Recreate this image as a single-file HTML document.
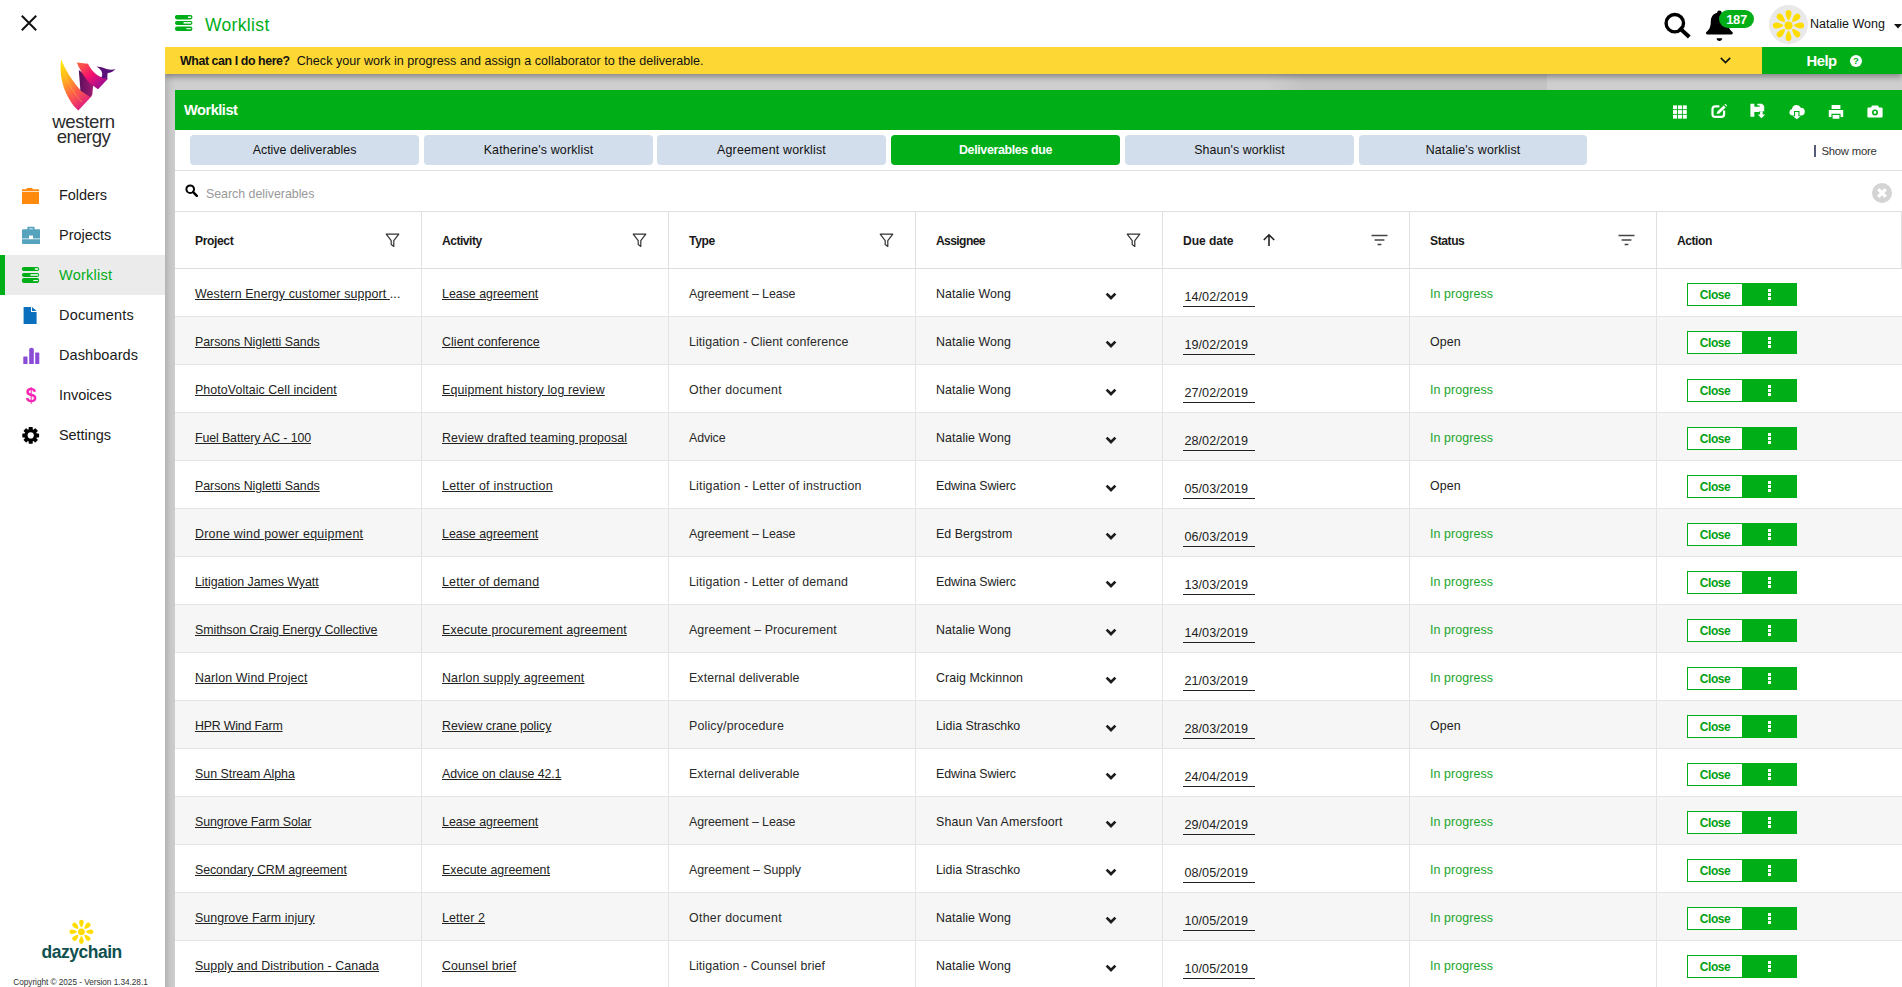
<!DOCTYPE html>
<html lang="en"><head><meta charset="utf-8"><title>Worklist</title>
<style>
*{box-sizing:border-box;margin:0;padding:0}
html,body{width:1902px;height:987px;overflow:hidden;background:#fff}
body{font-family:"Liberation Sans",sans-serif;font-size:12.4px;color:#222;position:relative}
a{color:#222;text-decoration:underline;text-underline-offset:1px}
svg{display:block}
.abs{position:absolute}

/* ---------- sidebar ---------- */
#side{position:absolute;left:0;top:0;width:165px;height:987px;background:#fff;z-index:5}
#side .x{position:absolute;left:21px;top:15px;width:16px;height:16px}
#side .logo{position:absolute;left:58px;top:58px;width:60px;height:54px}
#side .wtxt{position:absolute;left:0;width:165px;text-align:center;color:#2c2c2c;font-size:18.6px;letter-spacing:-.35px;line-height:16px}
#side .wtxt.w1{top:114px;left:1px}
#side .wtxt.w2{top:129.4px;left:1px;letter-spacing:-.55px}
.nav{position:absolute;left:0;width:165px;height:40px}
.nav.act{background:#ebebeb;border-left:5px solid #00ae18}
.nav .ico{position:absolute;top:11px;left:21px;width:19px;height:18px}
.nav.act .ico{left:16px}
.nav .lbl{position:absolute;left:59px;top:0;line-height:40px;font-size:14.5px;color:#1a1a1a}
.nav.act .lbl{left:54px;color:#00ae18}
#dazy{position:absolute;left:40px;top:918px;width:84px;height:50px}
#dztxt{position:absolute;left:0;top:941.4px;width:165px;text-align:center;font-size:18.8px;font-weight:700;color:#10504f;letter-spacing:-.5px;transform:scaleX(.93);transform-origin:81.6px 0;line-height:22px;padding-right:1.8px}
#copy{position:absolute;left:0;top:976.6px;width:165px;text-align:center;font-size:8.25px;color:#333;line-height:11px;padding-right:4px}

/* ---------- main ---------- */
#main{position:absolute;left:165px;top:0;width:1737px;height:987px;background:#cecece}
#sideshadow{position:absolute;left:0;top:74px;width:10px;height:913px;background:linear-gradient(90deg,#b4b4b4,#c6c6c6 50%,#cecece)}
#top{position:absolute;left:0;top:0;width:1737px;height:47px;background:#fff;z-index:4}
#top .ticon{position:absolute;left:10px;top:15px;width:18px;height:16px}
#top .title{position:absolute;left:40px;top:0;line-height:51.6px;font-size:17.5px;color:#00ae18}
#ybar{position:absolute;left:0;top:47px;width:1737px;height:27px;background:#fdd835;box-shadow:0 3px 6px rgba(0,0,0,.35);z-index:3}
#ybar .q{position:absolute;left:15px;top:0;line-height:28.4px;font-size:12.58px;color:#111}
#ybar .q b{font-weight:700;letter-spacing:-.42px;font-size:12.4px}
#ybar .chv{position:absolute;left:1555px;top:10px;width:11px;height:7px}
#help{position:absolute;left:1597px;top:0;width:140px;height:27px;background:#00ae18;color:#fff}
#help b{position:absolute;left:44.6px;top:0;line-height:28px;font-size:14.8px;letter-spacing:-.52px}
#help .qi{position:absolute;left:88.4px;top:8.2px;width:12px;height:12px}

#panel{position:absolute;left:10px;top:90px;width:1727px;height:897px;background:#fff}
#phead{position:absolute;left:0;top:0;width:1727px;height:40px;background:#00ae18}
#phead .pt{position:absolute;left:9px;top:0;line-height:40px;font-size:14.6px;font-weight:700;color:#fff;letter-spacing:-.49px}
#phead svg{position:absolute;top:15px;width:16px;height:14px}
#tabs{position:absolute;left:0;top:40px;width:1727px;height:41px;border-bottom:1px solid #e0e0e0}
.tab{position:absolute;top:5px;width:229px;height:30px;border-radius:4px;background:#d3deec;text-align:center;line-height:31px;font-size:12.4px;color:#111}
.tab.on{background:#00ae18;color:#fff;font-weight:700;letter-spacing:-.34px}
#more{position:absolute;left:1639px;top:13.8px;font-size:11.3px;color:#333;line-height:14px;white-space:nowrap}
#more i{display:inline-block;width:2px;height:12.6px;background:#565b78;vertical-align:-2.4px;margin-right:5.4px}
#search{position:absolute;left:0;top:81px;width:1727px;height:41px;border-bottom:1px solid #e0e0e0}
#search .si{position:absolute;left:9.6px;top:13.2px;width:13px;height:13px}
#search .ph{position:absolute;left:31px;top:0;line-height:47px;font-size:12.4px;color:#999}
#search .clr{position:absolute;left:1697px;top:11.7px;width:20px;height:20px}
#thead{position:absolute;left:0;top:122px;width:1727px;height:57px;border-bottom:1px solid #dedede}
.th{position:absolute;top:0;height:56px;width:247px;border-right:1px solid #e0e0e0;line-height:59px;padding-left:20px;font-weight:700;font-size:12.1px;color:#1a1a1a;letter-spacing:-.4px}
.th svg{position:absolute}
.rows{position:absolute;left:0;top:179px;width:1727px;height:720px}
.row{position:absolute;left:0;width:1727px;height:48px;border-bottom:1px solid #e4e4e4;background:#fff}
.row.alt{background:#f6f6f6}
.c{position:absolute;top:0;height:47px;width:247px;border-right:1px solid #e4e4e4;padding-left:20px;line-height:50px;white-space:nowrap;overflow:hidden;color:#222}
.c1{left:0}.c2{left:247px}.c3{left:494px}.c4{left:741px}.c5{left:988px}.c6{left:1235px}.c7{left:1482px;border-right:0;width:245px}
.c3{color:#2a2a2a}
.chev{position:absolute;left:189px;top:23px;width:12px;height:8px}
.date{position:absolute;left:20px;top:16px;width:71.5px;height:22px;line-height:24px;border-bottom:1px solid #222;padding-left:1.4px;font-size:12.6px;letter-spacing:0.067px}
.st.prog{color:#1aa52b}
.btn{position:absolute;left:30px;top:14px;width:110px;height:23px;border:1px solid #00ae18;background:#fff}
.bclose{position:absolute;left:0;top:0;width:54px;height:21px;line-height:22px;text-align:center;color:#00a012;font-weight:700;font-size:12px;letter-spacing:-.45px}
.bmore{position:absolute;left:54px;top:-1px;width:55px;height:23px;background:#00ae18}
.bmore i{position:absolute;left:26px;width:3px;height:3px;background:#fff}
.bmore i:nth-child(1){top:6px}.bmore i:nth-child(2){top:10px}.bmore i:nth-child(3){top:14px}

#dk{position:absolute;left:1100px;top:74px;width:282px;height:16px;background:linear-gradient(90deg,rgba(0,0,0,0),rgba(0,0,0,.055) 14%,rgba(0,0,0,.055))}

</style></head>
<body>
<div id="side">
<svg class="x" viewBox="0 0 16 16"><path d="M0.8 0.8 L15.2 15.2 M15.2 0.8 L0.8 15.2" stroke="#111" stroke-width="2" fill="none"/></svg>
<svg class="logo" viewBox="58 58 60 54">
<defs>
<linearGradient id="g1" x1="0" y1="0" x2="0.55" y2="1"><stop offset="0" stop-color="#fff200"/><stop offset="0.35" stop-color="#ffb21e"/><stop offset="0.7" stop-color="#ff5a4a"/><stop offset="1" stop-color="#e0207e"/></linearGradient>
<linearGradient id="g2" x1="0" y1="0" x2="1" y2="1"><stop offset="0" stop-color="#ff6a3a"/><stop offset="0.45" stop-color="#f5126e"/><stop offset="1" stop-color="#7a0aa0"/></linearGradient>
<linearGradient id="g3" x1="0" y1="0" x2="1" y2="0"><stop offset="0" stop-color="#5a0f5e"/><stop offset="1" stop-color="#a01a70"/></linearGradient>
</defs>
<path d="M61.3 59.2 C64 68 73 82 80.4 90 L92.1 95.7 L78.3 110.6 C66 99 58 78 61.3 59.2Z" fill="url(#g1)"/><path d="M63.5 68 C66 80 72 92 82 102" fill="none" stroke="#ffd23a" stroke-opacity=".55" stroke-width=".7"/>
<path d="M78.8 70 L80.4 90.4 L90.2 97 L92.3 94.6 L93.2 84.5 L84 74Z" fill="url(#g3)"/>
<path d="M76.7 62.5 L88 63.8 C91 70 96 75.5 102.8 77.7 L108 78.8 L98 89.3 L92.1 85.1 C86 80 80.5 71.5 76.7 62.5Z" fill="url(#g2)"/>
<path d="M96.4 66.5 C103 66.3 108 71.5 115.6 69 C112.5 72.3 109.5 73 107.6 73 L107.2 79 L101.2 77.7 C103 75 103.2 70.5 96.4 66.5Z" fill="#5a1078"/>
</svg>
<div class="wtxt w1">western</div>
<div class="wtxt w2">energy</div>

<div class="nav" style="top:175px"><svg class="ico" viewBox="0 0 19 18"><path d="M1 3.2 H5.2 L6.2 2 H11 L12 3.2 H18 V5.2 H1Z M1 6 H18 V18 H1Z" fill="#ff8a0d"/></svg><span class="lbl" style="letter-spacing:-0.044px">Folders</span></div>
<div class="nav" style="top:215px"><svg class="ico" viewBox="0 0 19 18"><path d="M7 0.8 H13 Q13.6 0.8 13.6 1.4 V3.3 H18.3 Q19.3 3.3 19.3 4.3 V12.4 H12 V9.6 H8 V12.4 H1 V4.3 Q1 3.3 2 3.3 H6.4 V1.4 Q6.4 0.8 7 0.8Z M8.2 2.4 V3.3 H11.8 V2.4Z M1 13.3 H19.3 V16.9 Q19.3 17.9 18.3 17.9 H2 Q1 17.9 1 16.9Z" fill="#56a3bd" fill-rule="evenodd"/></svg><span class="lbl" style="letter-spacing:-0.014px">Projects</span></div>
<div class="nav act" style="top:255px"><svg class="ico" viewBox="0 0 19 18"><g fill="#00ae18"><rect x="0.9" y="1" width="17.2" height="4" rx="1.8"/><rect x="0.9" y="7" width="17.2" height="3.9" rx="1.8"/><rect x="0.9" y="12.1" width="17.2" height="4.8" rx="2"/></g><g fill="#fff"><rect x="13.9" y="2.3" width="3.1" height="1.5"/><rect x="9.4" y="8.2" width="7.6" height="1.5"/><rect x="12.2" y="14.1" width="4.8" height="1"/></g></svg><span class="lbl" style="letter-spacing:0.236px">Worklist</span></div>
<div class="nav" style="top:295px"><svg class="ico" viewBox="0 0 19 18"><path d="M2.6 1 H10 V6 H15.6 V18 H2.6Z M11 1 L15.6 5 H11Z" fill="#0a70bd"/></svg><span class="lbl" style="letter-spacing:0.185px">Documents</span></div>
<div class="nav" style="top:335px"><svg class="ico" viewBox="0 0 19 18"><g fill="#8a4cd6"><rect x="2.3" y="10.4" width="4.2" height="7.6" rx=".6"/><path d="M8.2 18 V3.6 Q8.2 1.7 10.5 1.7 Q12.8 1.7 12.8 3.6 V18Z"/><rect x="14.2" y="6.6" width="4.1" height="11.4" rx=".6"/></g></svg><span class="lbl" style="letter-spacing:0.087px">Dashboards</span></div>
<div class="nav" style="top:375px"><svg class="ico" viewBox="0 0 19 18" style="overflow:visible"><text x="10.2" y="15.6" text-anchor="middle" font-family="Liberation Sans, sans-serif" font-size="19.5" font-weight="700" fill="#f725b2">$</text></svg><span class="lbl" style="letter-spacing:-0.062px">Invoices</span></div>
<div class="nav" style="top:415px"><svg class="ico" viewBox="0 0 19 18"><g transform="translate(9.7,9.4)"><g fill="#000"><rect x="-2" y="-8.4" width="4" height="16.8" rx=".6"/><rect x="-2" y="-8.4" width="4" height="16.8" rx=".6" transform="rotate(45)"/><rect x="-2" y="-8.4" width="4" height="16.8" rx=".6" transform="rotate(90)"/><rect x="-2" y="-8.4" width="4" height="16.8" rx=".6" transform="rotate(135)"/><circle r="6.3"/></g><circle r="3.1" fill="#fff"/></g></svg><span class="lbl" style="letter-spacing:-0.063px">Settings</span></div>

<svg id="dazy" viewBox="40 918 84 50"><g transform="translate(81.4,931.8)" fill="#ffdd00"><circle r="3.4"/><g id="pt"><path d="M0 -4.2 C-1.2 -5.3 -2.3 -7.8 -2.25 -9.7 C-2.2 -11.3 -1.2 -12 0 -12 C1.2 -12 2.2 -11.3 2.25 -9.7 C2.3 -7.8 1.2 -5.3 0 -4.2Z"/></g><use href="#pt" transform="rotate(45)"/><use href="#pt" transform="rotate(90)"/><use href="#pt" transform="rotate(135)"/><use href="#pt" transform="rotate(180)"/><use href="#pt" transform="rotate(225)"/><use href="#pt" transform="rotate(270)"/><use href="#pt" transform="rotate(315)"/></g></svg>
<div id="dztxt">dazychain</div>
<div id="copy" style="letter-spacing:-0.042px">Copyright © 2025 - Version 1.34.28.1</div>
</div>

<div id="main">
<div id="sideshadow"></div><div id="dk"></div>
<div id="top">
<svg class="ticon" viewBox="0 0 18 16"><g fill="#00ae18"><rect x="0" y="0" width="17.4" height="4.4" rx="1.8"/><rect x="0" y="5.9" width="17.4" height="4" rx="1.8"/><rect x="0" y="11.4" width="17.4" height="4.5" rx="2"/></g><g fill="#fff"><rect x="13" y="1.5" width="3.1" height="1.5"/><rect x="8.5" y="7.1" width="7.6" height="1.5"/><rect x="11.3" y="13.2" width="4.8" height="1"/></g></svg>
<div class="title" style="letter-spacing:0.334px">Worklist</div>
<svg class="abs" style="left:1499px;top:12px;width:27px;height:27px" viewBox="0 0 27 27"><circle cx="10.8" cy="11.2" r="8.7" fill="none" stroke="#000" stroke-width="3.4"/><path d="M16.8 17.2 L23.8 23.6" stroke="#000" stroke-width="4" stroke-linecap="square"/></svg>
<svg class="abs" style="left:1540px;top:10px;width:30px;height:32px" viewBox="0 0 30 32"><path d="M14.4 0.6 C15.7 0.6 16.6 1.5 16.6 2.8 C21 3.8 23 7.4 23 11.6 C23 17 24.6 19.8 27.2 21.8 C28.4 22.8 27.8 24.6 26.2 24.6 H2.6 C1 24.6 0.4 22.8 1.6 21.8 C4.2 19.8 5.8 17 5.8 11.6 C5.8 7.4 7.8 3.8 12.2 2.8 C12.2 1.5 13.1 0.6 14.4 0.6Z M11.6 28.2 H17.2 C17.2 29.8 16 31 14.4 31 C12.8 31 11.6 29.8 11.6 28.2Z" fill="#000"/></svg>
<div class="abs" style="left:1554px;top:10px;width:35px;height:18px;border-radius:9px;background:#00ae18;color:#fff;font-weight:700;font-size:13px;line-height:20.4px;text-align:center;letter-spacing:-.47px">187</div>
<div class="abs" style="left:1604px;top:5px;width:39px;height:39px;border-radius:50%;background:#e9e9e9"></div>
<svg class="abs" style="left:1607px;top:9px;width:33px;height:33px" viewBox="-16.5 -16.5 33 33"><g fill="#ffdd00"><circle r="4"/><path id="pa" d="M0 -5 C-1.6 -6.5 -3 -10 -2.95 -12.5 C-2.9 -14.6 -1.6 -15.6 0 -15.6 C1.6 -15.6 2.9 -14.6 2.95 -12.5 C3 -10 1.6 -6.5 0 -5Z"/><use href="#pa" transform="rotate(45)"/><use href="#pa" transform="rotate(90)"/><use href="#pa" transform="rotate(135)"/><use href="#pa" transform="rotate(180)"/><use href="#pa" transform="rotate(225)"/><use href="#pa" transform="rotate(270)"/><use href="#pa" transform="rotate(315)"/></g></svg>
<div class="abs" style="left:1645px;top:0;line-height:49px;font-size:12.5px;color:#111;white-space:nowrap;letter-spacing:0.003px">Natalie Wong</div>
<svg class="abs" style="left:1729px;top:24px;width:8px;height:5px" viewBox="0 0 8 5"><path d="M0 0 H8 L4 4.6Z" fill="#111"/></svg>
</div>

<div id="ybar">
<div class="q"><b>What can I do here?</b>&nbsp; <span style="letter-spacing:0.009px">Check your work in progress and assign a collaborator to the deliverable.</span></div>
<svg class="chv" viewBox="0 0 11 7"><path d="M0.8 0.9 L5.5 5.6 L10.2 0.9" fill="none" stroke="#111" stroke-width="1.6"/></svg>
<div id="help"><b>Help</b><svg class="qi" viewBox="0 0 12 12"><circle cx="6" cy="6" r="6" fill="#fff"/><text x="6" y="9.4" text-anchor="middle" font-family="Liberation Sans, sans-serif" font-weight="700" font-size="9.5" fill="#00ae18">?</text></svg></div>
</div>

<div id="panel">
<div id="phead"><div class="pt">Worklist</div>
<svg style="left:1497px" viewBox="0 0 16 14"><g fill="#fff"><rect x="1" y="0.4" width="4" height="3.8"/><rect x="5.9" y="0.4" width="4" height="3.8"/><rect x="10.8" y="0.4" width="4" height="3.8"/><rect x="1" y="5.1" width="4" height="3.8"/><rect x="5.9" y="5.1" width="4" height="3.8"/><rect x="10.8" y="5.1" width="4" height="3.8"/><rect x="1" y="9.8" width="4" height="3.8"/><rect x="5.9" y="9.8" width="4" height="3.8"/><rect x="10.8" y="9.8" width="4" height="3.8"/></g></svg>
<svg style="left:1536px;overflow:visible" viewBox="0 0 16 14"><path d="M8.4 1.3 H4.2 Q1.5 1.3 1.5 4 V9.2 Q1.5 11.9 4.2 11.9 H10.4 Q13.1 11.9 13.1 9.2 V5.6" fill="none" stroke="#fff" stroke-width="2.2"/><path d="M5.6 9 L6.4 6.6 L12.6 0.4 L14.6 2.4 L8.4 8.6 Z M13.4 -0.4 L14.2 -1.2 L16.2 0.8 L15.4 1.6Z" fill="#fff"/></svg>
<svg style="left:1575px;overflow:visible" viewBox="0 0 16 14"><path d="M0.4 -1.2 H4.4 V1.8 H9.7 V0.4 H7.4 V-1.2 H12 L14.2 1 V6.2 H9.4 V7 H4.3 V11.8 H0.4Z" fill="#fff"/><path d="M10.1 6.2 H12.7 V9.4 H15.2 L11.4 13.2 L7.7 9.4 H10.1Z" fill="#fff"/></svg>
<svg style="left:1614px;overflow:visible" viewBox="0 0 16 14"><path d="M4 10.4 Q0.4 10.4 0.4 7.2 Q0.4 4.6 3 4 Q3.6 0 7.6 0 Q10.6 0 11.8 2.8 Q15.8 3 15.8 6.8 Q15.8 10.4 12 10.4 H10.5 V5.9 H5 V10.4Z" fill="#fff"/><path d="M6.1 6.9 H9.4 V11.2 H11.7 L7.8 14.2 L3.9 11.2 H6.1Z" fill="#fff"/></svg>
<svg style="left:1653px" viewBox="0 0 16 14"><path d="M3.6 -0.6 H12.4 V4 H3.6Z M0.8 5 H15.2 V12 H12.6 V8.8 H3.4 V12 H0.8Z M4.6 10 H11.4 V13.8 H4.6Z" fill="#fff"/></svg>
<svg style="left:1692px" viewBox="0 0 16 14"><path d="M5 0.6 H11 L12 2.6 H14.6 Q15.6 2.6 15.6 3.6 V11.6 Q15.6 12.6 14.6 12.6 H1.4 Q0.4 12.6 0.4 11.6 V3.6 Q0.4 2.6 1.4 2.6 H4Z M8 4.4 A3 3 0 1 0 8 10.4 A3 3 0 1 0 8 4.4Z M8 6 A1.4 1.4 0 1 1 8 8.8 A1.4 1.4 0 1 1 8 6Z" fill="#fff" fill-rule="evenodd"/></svg>
</div>

<div id="tabs">
<div class="tab" style="left:15px;letter-spacing:0.023px">Active deliverables</div>
<div class="tab" style="left:249px;letter-spacing:0.168px">Katherine's worklist</div>
<div class="tab" style="left:482px;letter-spacing:0.200px">Agreement worklist</div>
<div class="tab on" style="left:716px">Deliverables due</div>
<div class="tab" style="left:950px;letter-spacing:0.095px">Shaun's worklist</div>
<div class="tab" style="left:1184px;width:228px;letter-spacing:0.158px">Natalie's worklist</div>
<div id="more" style="letter-spacing:-0.216px"><i></i>Show more</div>
</div>

<div id="search">
<svg class="si" viewBox="0 0 13 13"><circle cx="5.2" cy="5.2" r="3.8" fill="none" stroke="#000" stroke-width="2"/><path d="M8.2 8.2 L11.8 11.8" stroke="#000" stroke-width="2.4" stroke-linecap="round"/></svg>
<div class="ph" style="letter-spacing:-0.022px">Search deliverables</div>
<svg class="clr" viewBox="0 0 20 20"><circle cx="10" cy="10" r="10" fill="#d4d4d4"/><path d="M6.2 6.2 L13.8 13.8 M13.8 6.2 L6.2 13.8" stroke="#fff" stroke-width="3.3"/></svg>
</div>

<div id="thead">
<div class="th" style="left:0;letter-spacing:-0.386px">Project<svg style="left:210px;top:21px;width:15px;height:15px" viewBox="0 0 15 15"><path d="M1.2 1.2 H13.8 L8.8 7.6 V13.4 L6.2 11.6 V7.6Z" fill="none" stroke="#333" stroke-width="1.2" stroke-linejoin="round"/></svg></div>
<div class="th" style="left:247px;letter-spacing:-0.5px">Activity<svg style="left:210px;top:21px;width:15px;height:15px" viewBox="0 0 15 15"><path d="M1.2 1.2 H13.8 L8.8 7.6 V13.4 L6.2 11.6 V7.6Z" fill="none" stroke="#333" stroke-width="1.2" stroke-linejoin="round"/></svg></div>
<div class="th" style="left:494px;letter-spacing:-0.335px">Type<svg style="left:210px;top:21px;width:15px;height:15px" viewBox="0 0 15 15"><path d="M1.2 1.2 H13.8 L8.8 7.6 V13.4 L6.2 11.6 V7.6Z" fill="none" stroke="#333" stroke-width="1.2" stroke-linejoin="round"/></svg></div>
<div class="th" style="left:741px;letter-spacing:-0.61px">Assignee<svg style="left:210px;top:21px;width:15px;height:15px" viewBox="0 0 15 15"><path d="M1.2 1.2 H13.8 L8.8 7.6 V13.4 L6.2 11.6 V7.6Z" fill="none" stroke="#333" stroke-width="1.2" stroke-linejoin="round"/></svg></div>
<div class="th" style="left:988px;letter-spacing:-0.07px">Due date<svg style="left:99px;top:21px;width:14px;height:14px" viewBox="0 0 14 14"><path d="M7 13 V1.8 M1.8 7 L7 1.8 L12.2 7" fill="none" stroke="#222" stroke-width="1.6"/></svg><svg style="left:208px;top:22px;width:17px;height:12px" viewBox="0 0 17 12"><path d="M0.5 1.4 H16.5 M3.6 6 H13.4 M6.6 10.6 H10.4" stroke="#444" stroke-width="1.5"/></svg></div>
<div class="th" style="left:1235px;letter-spacing:-0.43px">Status<svg style="left:208px;top:22px;width:17px;height:12px" viewBox="0 0 17 12"><path d="M0.5 1.4 H16.5 M3.6 6 H13.4 M6.6 10.6 H10.4" stroke="#444" stroke-width="1.5"/></svg></div>
<div class="th" style="left:1482px;width:245px;letter-spacing:-.47px">Action</div>
</div>

<div class="rows">
<div class="row" style="top:0px">
<div class="c c1" style="letter-spacing:0.112px"><a>Western Energy customer support </a>...</div>
<div class="c c2" style="letter-spacing:-0.009px"><a>Lease agreement</a></div>
<div class="c c3" style="letter-spacing:-0.106px">Agreement – Lease</div>
<div class="c c4" style="letter-spacing:0.058px"><span>Natalie Wong</span><svg class="chev" viewBox="0 0 12 8"><path d="M1.6 1.6 L6 6 L10.4 1.6" fill="none" stroke="#1d1d1d" stroke-width="2.7"/></svg></div>
<div class="c c5"><span class="date">14/02/2019</span></div>
<div class="c c6" style="letter-spacing:0.091px"><span class="st prog">In progress</span></div>
<div class="c c7"><div class="btn"><span class="bclose">Close</span><span class="bmore"><i></i><i></i><i></i></span></div></div>
</div>
<div class="row alt" style="top:48px">
<div class="c c1" style="letter-spacing:-0.029px"><a>Parsons Nigletti Sands</a></div>
<div class="c c2" style="letter-spacing:0.072px"><a>Client conference</a></div>
<div class="c c3" style="letter-spacing:0.079px">Litigation - Client conference</div>
<div class="c c4" style="letter-spacing:0.058px"><span>Natalie Wong</span><svg class="chev" viewBox="0 0 12 8"><path d="M1.6 1.6 L6 6 L10.4 1.6" fill="none" stroke="#1d1d1d" stroke-width="2.7"/></svg></div>
<div class="c c5"><span class="date">19/02/2019</span></div>
<div class="c c6" style="letter-spacing:0.121px"><span class="st">Open</span></div>
<div class="c c7"><div class="btn"><span class="bclose">Close</span><span class="bmore"><i></i><i></i><i></i></span></div></div>
</div>
<div class="row" style="top:96px">
<div class="c c1" style="letter-spacing:0.078px"><a>PhotoVoltaic Cell incident</a></div>
<div class="c c2" style="letter-spacing:0.156px"><a>Equipment history log review</a></div>
<div class="c c3" style="letter-spacing:0.287px">Other document</div>
<div class="c c4" style="letter-spacing:0.058px"><span>Natalie Wong</span><svg class="chev" viewBox="0 0 12 8"><path d="M1.6 1.6 L6 6 L10.4 1.6" fill="none" stroke="#1d1d1d" stroke-width="2.7"/></svg></div>
<div class="c c5"><span class="date">27/02/2019</span></div>
<div class="c c6" style="letter-spacing:0.091px"><span class="st prog">In progress</span></div>
<div class="c c7"><div class="btn"><span class="bclose">Close</span><span class="bmore"><i></i><i></i><i></i></span></div></div>
</div>
<div class="row alt" style="top:144px">
<div class="c c1" style="letter-spacing:-0.118px"><a>Fuel Battery AC - 100</a></div>
<div class="c c2" style="letter-spacing:0.132px"><a>Review drafted teaming proposal</a></div>
<div class="c c3" style="letter-spacing:-0.127px">Advice</div>
<div class="c c4" style="letter-spacing:0.058px"><span>Natalie Wong</span><svg class="chev" viewBox="0 0 12 8"><path d="M1.6 1.6 L6 6 L10.4 1.6" fill="none" stroke="#1d1d1d" stroke-width="2.7"/></svg></div>
<div class="c c5"><span class="date">28/02/2019</span></div>
<div class="c c6" style="letter-spacing:0.091px"><span class="st prog">In progress</span></div>
<div class="c c7"><div class="btn"><span class="bclose">Close</span><span class="bmore"><i></i><i></i><i></i></span></div></div>
</div>
<div class="row" style="top:192px">
<div class="c c1" style="letter-spacing:-0.029px"><a>Parsons Nigletti Sands</a></div>
<div class="c c2" style="letter-spacing:0.260px"><a>Letter of instruction</a></div>
<div class="c c3" style="letter-spacing:0.194px">Litigation - Letter of instruction</div>
<div class="c c4" style="letter-spacing:-0.109px"><span>Edwina Swierc</span><svg class="chev" viewBox="0 0 12 8"><path d="M1.6 1.6 L6 6 L10.4 1.6" fill="none" stroke="#1d1d1d" stroke-width="2.7"/></svg></div>
<div class="c c5"><span class="date">05/03/2019</span></div>
<div class="c c6" style="letter-spacing:0.121px"><span class="st">Open</span></div>
<div class="c c7"><div class="btn"><span class="bclose">Close</span><span class="bmore"><i></i><i></i><i></i></span></div></div>
</div>
<div class="row alt" style="top:240px">
<div class="c c1" style="letter-spacing:0.275px"><a>Drone wind power equipment</a></div>
<div class="c c2" style="letter-spacing:-0.009px"><a>Lease agreement</a></div>
<div class="c c3" style="letter-spacing:-0.106px">Agreement – Lease</div>
<div class="c c4" style="letter-spacing:0.054px"><span>Ed Bergstrom</span><svg class="chev" viewBox="0 0 12 8"><path d="M1.6 1.6 L6 6 L10.4 1.6" fill="none" stroke="#1d1d1d" stroke-width="2.7"/></svg></div>
<div class="c c5"><span class="date">06/03/2019</span></div>
<div class="c c6" style="letter-spacing:0.091px"><span class="st prog">In progress</span></div>
<div class="c c7"><div class="btn"><span class="bclose">Close</span><span class="bmore"><i></i><i></i><i></i></span></div></div>
</div>
<div class="row" style="top:288px">
<div class="c c1" style="letter-spacing:-0.039px"><a>Litigation James Wyatt</a></div>
<div class="c c2" style="letter-spacing:0.223px"><a>Letter of demand</a></div>
<div class="c c3" style="letter-spacing:0.163px">Litigation - Letter of demand</div>
<div class="c c4" style="letter-spacing:-0.109px"><span>Edwina Swierc</span><svg class="chev" viewBox="0 0 12 8"><path d="M1.6 1.6 L6 6 L10.4 1.6" fill="none" stroke="#1d1d1d" stroke-width="2.7"/></svg></div>
<div class="c c5"><span class="date">13/03/2019</span></div>
<div class="c c6" style="letter-spacing:0.091px"><span class="st prog">In progress</span></div>
<div class="c c7"><div class="btn"><span class="bclose">Close</span><span class="bmore"><i></i><i></i><i></i></span></div></div>
</div>
<div class="row alt" style="top:336px">
<div class="c c1" style="letter-spacing:-0.066px"><a>Smithson Craig Energy Collective</a></div>
<div class="c c2" style="letter-spacing:0.149px"><a>Execute procurement agreement</a></div>
<div class="c c3" style="letter-spacing:0.109px">Agreement – Procurement</div>
<div class="c c4" style="letter-spacing:0.058px"><span>Natalie Wong</span><svg class="chev" viewBox="0 0 12 8"><path d="M1.6 1.6 L6 6 L10.4 1.6" fill="none" stroke="#1d1d1d" stroke-width="2.7"/></svg></div>
<div class="c c5"><span class="date">14/03/2019</span></div>
<div class="c c6" style="letter-spacing:0.091px"><span class="st prog">In progress</span></div>
<div class="c c7"><div class="btn"><span class="bclose">Close</span><span class="bmore"><i></i><i></i><i></i></span></div></div>
</div>
<div class="row" style="top:384px">
<div class="c c1" style="letter-spacing:0.119px"><a>Narlon Wind Project</a></div>
<div class="c c2" style="letter-spacing:0.175px"><a>Narlon supply agreement</a></div>
<div class="c c3" style="letter-spacing:0.089px">External deliverable</div>
<div class="c c4" style="letter-spacing:0.071px"><span>Craig Mckinnon</span><svg class="chev" viewBox="0 0 12 8"><path d="M1.6 1.6 L6 6 L10.4 1.6" fill="none" stroke="#1d1d1d" stroke-width="2.7"/></svg></div>
<div class="c c5"><span class="date">21/03/2019</span></div>
<div class="c c6" style="letter-spacing:0.091px"><span class="st prog">In progress</span></div>
<div class="c c7"><div class="btn"><span class="bclose">Close</span><span class="bmore"><i></i><i></i><i></i></span></div></div>
</div>
<div class="row alt" style="top:432px">
<div class="c c1" style="letter-spacing:-0.205px"><a>HPR Wind Farm</a></div>
<div class="c c2" style="letter-spacing:-0.047px"><a>Review crane policy</a></div>
<div class="c c3" style="letter-spacing:0.168px">Policy/procedure</div>
<div class="c c4" style="letter-spacing:-0.035px"><span>Lidia Straschko</span><svg class="chev" viewBox="0 0 12 8"><path d="M1.6 1.6 L6 6 L10.4 1.6" fill="none" stroke="#1d1d1d" stroke-width="2.7"/></svg></div>
<div class="c c5"><span class="date">28/03/2019</span></div>
<div class="c c6" style="letter-spacing:0.121px"><span class="st">Open</span></div>
<div class="c c7"><div class="btn"><span class="bclose">Close</span><span class="bmore"><i></i><i></i><i></i></span></div></div>
</div>
<div class="row" style="top:480px">
<div class="c c1" style="letter-spacing:-0.001px"><a>Sun Stream Alpha</a></div>
<div class="c c2" style="letter-spacing:-0.086px"><a>Advice on clause 42.1</a></div>
<div class="c c3" style="letter-spacing:0.089px">External deliverable</div>
<div class="c c4" style="letter-spacing:-0.109px"><span>Edwina Swierc</span><svg class="chev" viewBox="0 0 12 8"><path d="M1.6 1.6 L6 6 L10.4 1.6" fill="none" stroke="#1d1d1d" stroke-width="2.7"/></svg></div>
<div class="c c5"><span class="date">24/04/2019</span></div>
<div class="c c6" style="letter-spacing:0.091px"><span class="st prog">In progress</span></div>
<div class="c c7"><div class="btn"><span class="bclose">Close</span><span class="bmore"><i></i><i></i><i></i></span></div></div>
</div>
<div class="row alt" style="top:528px">
<div class="c c1" style="letter-spacing:-0.073px"><a>Sungrove Farm Solar</a></div>
<div class="c c2" style="letter-spacing:-0.009px"><a>Lease agreement</a></div>
<div class="c c3" style="letter-spacing:-0.106px">Agreement – Lease</div>
<div class="c c4" style="letter-spacing:0.142px"><span>Shaun Van Amersfoort</span><svg class="chev" viewBox="0 0 12 8"><path d="M1.6 1.6 L6 6 L10.4 1.6" fill="none" stroke="#1d1d1d" stroke-width="2.7"/></svg></div>
<div class="c c5"><span class="date">29/04/2019</span></div>
<div class="c c6" style="letter-spacing:0.091px"><span class="st prog">In progress</span></div>
<div class="c c7"><div class="btn"><span class="bclose">Close</span><span class="bmore"><i></i><i></i><i></i></span></div></div>
</div>
<div class="row" style="top:576px">
<div class="c c1" style="letter-spacing:-0.079px"><a>Secondary CRM agreement</a></div>
<div class="c c2" style="letter-spacing:0.030px"><a>Execute agreement</a></div>
<div class="c c3" style="letter-spacing:-0.016px">Agreement – Supply</div>
<div class="c c4" style="letter-spacing:-0.035px"><span>Lidia Straschko</span><svg class="chev" viewBox="0 0 12 8"><path d="M1.6 1.6 L6 6 L10.4 1.6" fill="none" stroke="#1d1d1d" stroke-width="2.7"/></svg></div>
<div class="c c5"><span class="date">08/05/2019</span></div>
<div class="c c6" style="letter-spacing:0.091px"><span class="st prog">In progress</span></div>
<div class="c c7"><div class="btn"><span class="bclose">Close</span><span class="bmore"><i></i><i></i><i></i></span></div></div>
</div>
<div class="row alt" style="top:624px">
<div class="c c1" style="letter-spacing:0.061px"><a>Sungrove Farm injury</a></div>
<div class="c c2" style="letter-spacing:0.126px"><a>Letter 2</a></div>
<div class="c c3" style="letter-spacing:0.287px">Other document</div>
<div class="c c4" style="letter-spacing:0.058px"><span>Natalie Wong</span><svg class="chev" viewBox="0 0 12 8"><path d="M1.6 1.6 L6 6 L10.4 1.6" fill="none" stroke="#1d1d1d" stroke-width="2.7"/></svg></div>
<div class="c c5"><span class="date">10/05/2019</span></div>
<div class="c c6" style="letter-spacing:0.091px"><span class="st prog">In progress</span></div>
<div class="c c7"><div class="btn"><span class="bclose">Close</span><span class="bmore"><i></i><i></i><i></i></span></div></div>
</div>
<div class="row" style="top:672px">
<div class="c c1" style="letter-spacing:0.069px"><a>Supply and Distribution - Canada</a></div>
<div class="c c2" style="letter-spacing:0.095px"><a>Counsel brief</a></div>
<div class="c c3" style="letter-spacing:0.092px">Litigation - Counsel brief</div>
<div class="c c4" style="letter-spacing:0.058px"><span>Natalie Wong</span><svg class="chev" viewBox="0 0 12 8"><path d="M1.6 1.6 L6 6 L10.4 1.6" fill="none" stroke="#1d1d1d" stroke-width="2.7"/></svg></div>
<div class="c c5"><span class="date">10/05/2019</span></div>
<div class="c c6" style="letter-spacing:0.091px"><span class="st prog">In progress</span></div>
<div class="c c7"><div class="btn"><span class="bclose">Close</span><span class="bmore"><i></i><i></i><i></i></span></div></div>
</div>
</div>
</div>
</body></html>
